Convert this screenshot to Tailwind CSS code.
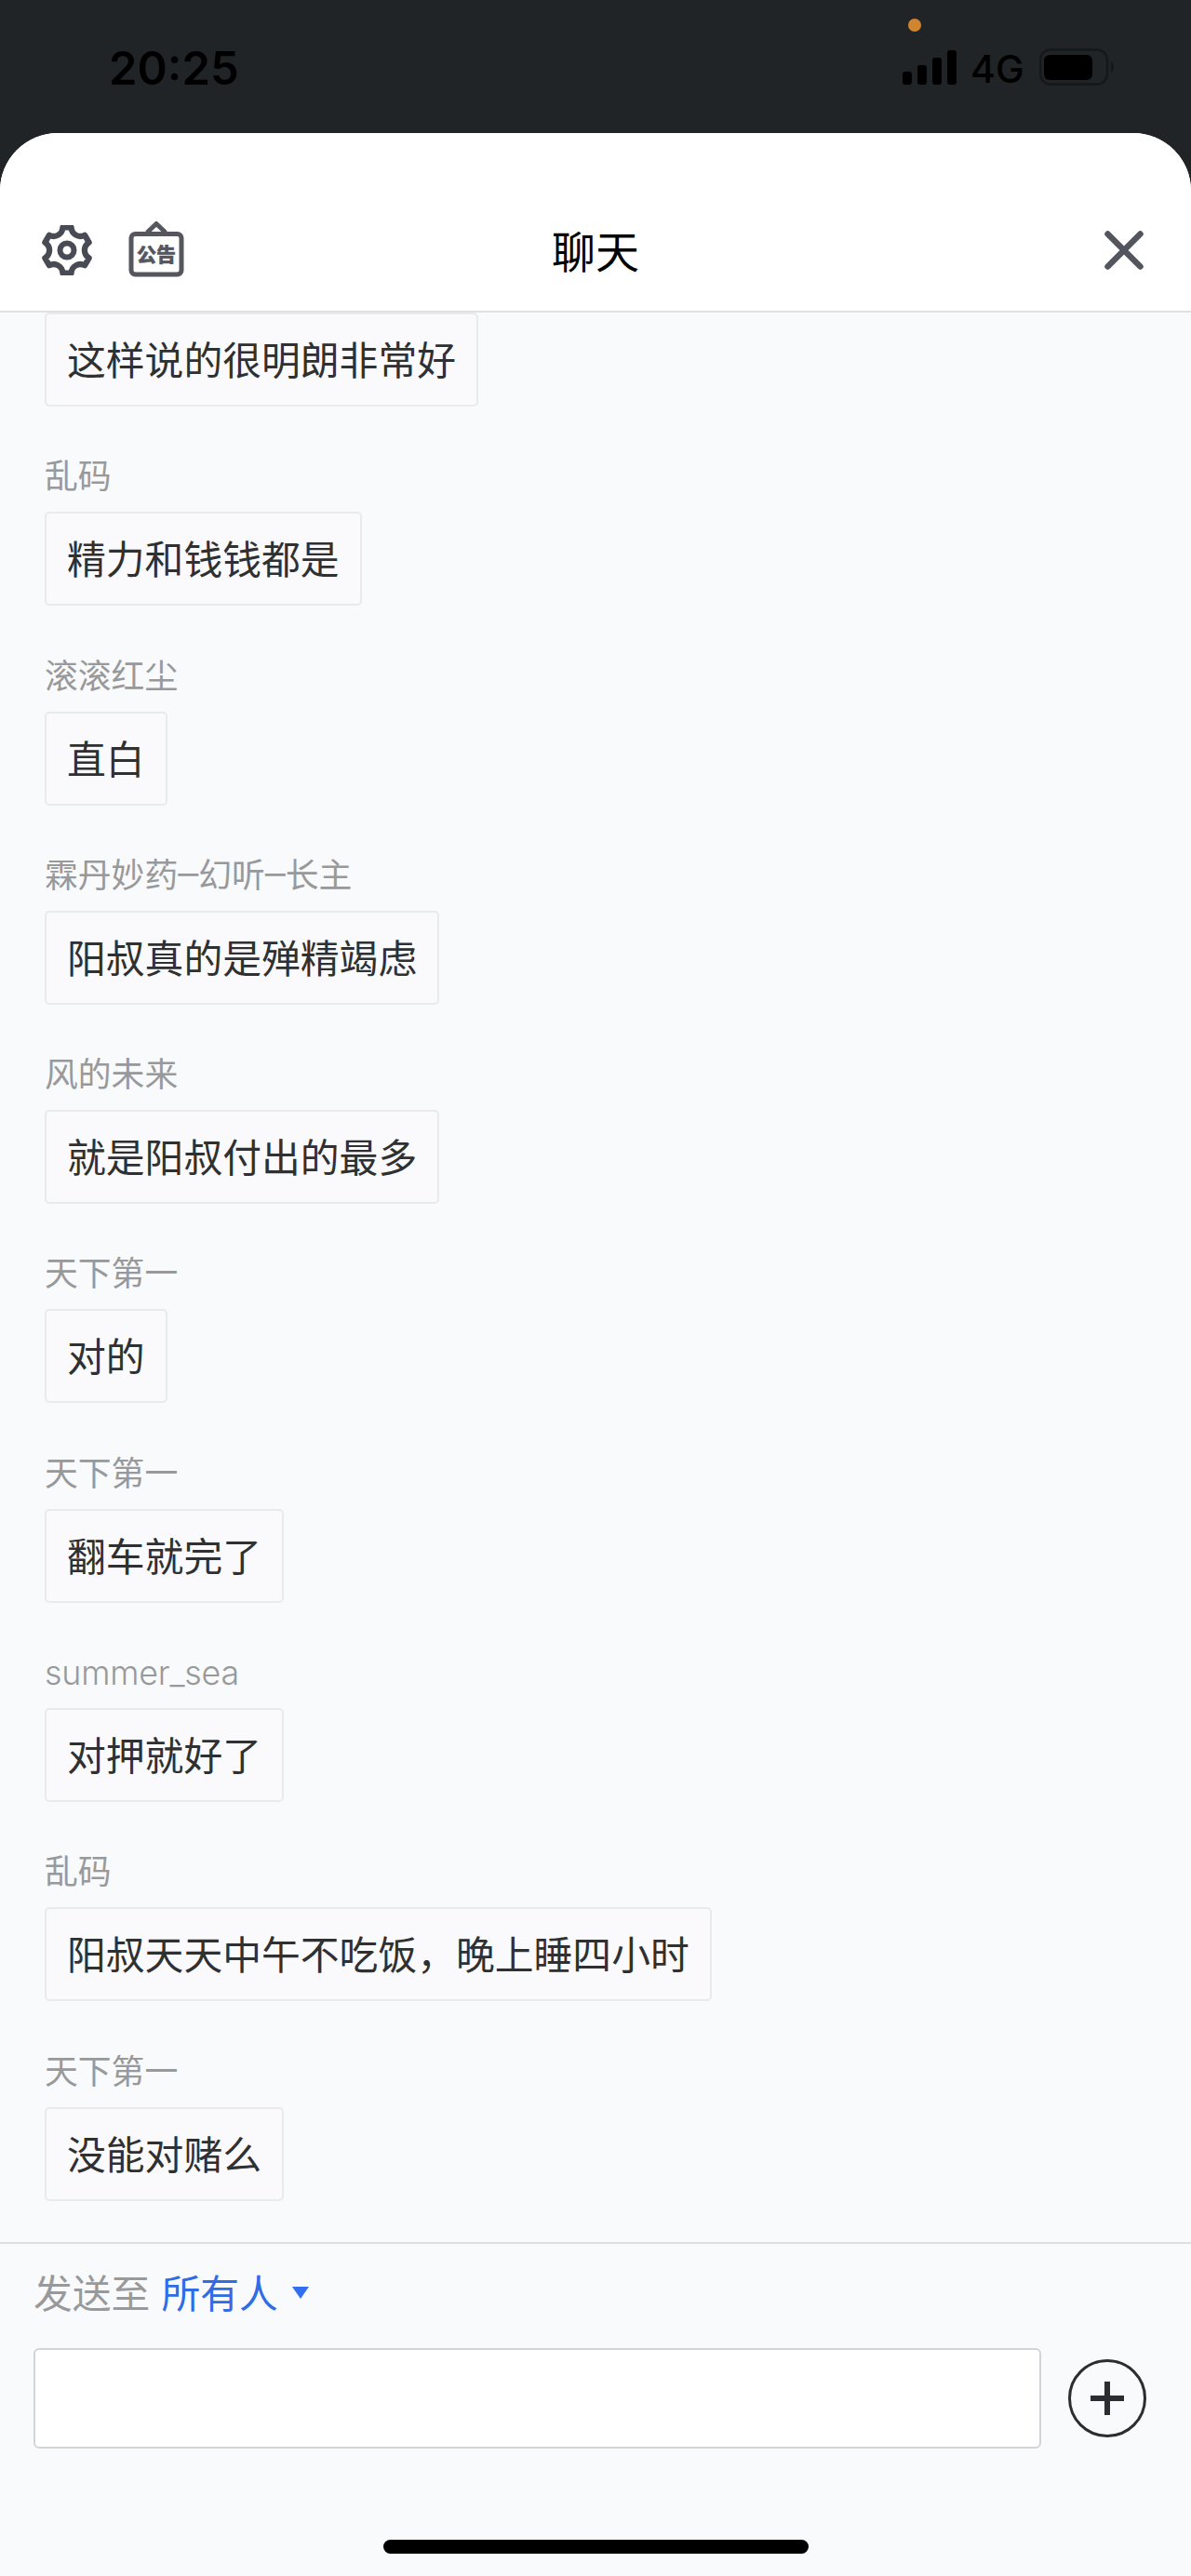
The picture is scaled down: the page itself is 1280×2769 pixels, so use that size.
<!DOCTYPE html>
<html lang="zh-CN">
<head>
  <meta charset="UTF-8">
  <meta name="viewport" content="width=device-width, initial-scale=1.0">
  <title>聊天</title>
  <script src="https://cdn.jsdelivr.net/npm/@tailwindcss/browser@4"></script>
</head>
<body class="bg-[#212426] font-['Inter','Noto_Sans_CJK_SC',sans-serif]">
  <div class="w-[1280px] h-[2769px] flex flex-col overflow-hidden">

    <!-- Status bar -->
    <div class="relative h-[143px] shrink-0 flex items-start justify-between pl-[117px] pr-[81px] pt-[45px] text-black">
      <span class="absolute left-[976px] top-[20px] size-[14px] rounded-full bg-[#d08630]"></span>
      <div class="text-[49px] leading-[57px] font-semibold">20:25</div>
      <div class="flex pt-[7px]">
        <svg class="w-[60px] h-[40px]" viewBox="0 0 60 40">
          <rect x="1" y="25" width="10" height="14" rx="3"/>
          <rect x="17" y="18" width="10" height="21" rx="3"/>
          <rect x="33" y="10" width="10" height="29" rx="3"/>
          <rect x="49" y="2" width="10" height="37" rx="3"/>
        </svg>
        <div class="w-[88px] pl-[14px] text-[41px] leading-[44px] font-medium">4G</div>
        <svg class="w-[82px] h-[40px]" viewBox="0 0 82 40">
          <rect x="1" y="1.500" width="72" height="37" rx="11" fill="none" stroke="#151718" stroke-width="2.500"/>
          <rect x="5" y="7" width="52" height="27" rx="6"/>
          <path d="M77 14c4 2 4 10 0 12z" fill="#151718"/>
        </svg>
      </div>
    </div>

    <!-- Chat sheet -->
    <div class="grow flex flex-col rounded-t-[62px] bg-[#f9fafc] overflow-hidden">
      <header class="h-[193px] shrink-0 bg-white border-b-2 border-[#e0e1e3] grid grid-cols-3 items-end px-[45px] pb-[35px]">
        <div class="flex items-end gap-[39px]">
          <svg class="size-[54px] mb-[3px]" viewBox="-27 -27 54 54" fill="none" stroke="#494b54" stroke-width="6" stroke-linejoin="round">
            <path transform="scale(1.050)" d="M22.500-8C16.500-4 16.500 4 22.500 8L18.180 15.490C11.710 12.290 4.790 16.290 4.320 23.490H-4.320C-4.790 16.290-11.710 12.290-18.180 15.490L-22.500 8C-16.500 4-16.500-4-22.500-8L-18.180-15.490C-11.710-12.290-4.790-16.290-4.320-23.490H4.320C4.790-16.290 11.710-12.290 18.180-15.490Z"/>
            <circle r="7.500"/>
          </svg>
          <svg class="w-[60px] h-[62px] mb-px" viewBox="0 0 60 62" fill="none" stroke="#55565e" stroke-width="5">
            <rect x="3" y="15.500" width="54" height="43.500" rx="4.500"/>
            <path d="M20 14L30 4.500l10 9.500" stroke-linejoin="round"/>
            <text x="30" y="44.500" text-anchor="middle" font-size="21" font-weight="900" fill="#55565e" stroke-width="0.400">公告</text>
          </svg>
        </div>
        <h1 class="text-center text-[47px] leading-[56px] text-black">聊天</h1>
        <svg class="size-[44px] justify-self-end mb-[8px] mr-[5px]" viewBox="0 0 44 44" stroke="#54565f" stroke-width="6.500" stroke-linecap="round">
          <path d="M4.500 4.500l35 35M39.500 4.500l-35 35"/>
        </svg>
      </header>

      <!-- Messages -->
      <main id="messages" class="h-[2074px] shrink-0 px-[48px] overflow-hidden"></main>

      <!-- Composer -->
      <footer class="grow border-t-2 border-[#dddee0] px-[36px] pt-[24px]">
        <div class="flex items-center h-[60px] text-[41.800px] leading-[60px]">
          <span class="text-[#98999b]">发送至</span>
          <span class="ml-[12px] text-[#2f6ce5]">所有人</span>
          <svg class="ml-[15px] mb-[4px] w-[18px] h-[13px]" viewBox="0 0 18 13" fill="#2f6ff0"><path d="M0 0h18L9 13z"/></svg>
        </div>
        <div class="mt-[28px] flex items-center">
          <input type="text" class="w-[1083px] h-[108px] rounded-[6px] border-2 border-[#d3d4d7] bg-white">
          <svg class="ml-[29px] size-[84px]" viewBox="0 0 84 84" fill="none" stroke="#2b2d30">
            <circle cx="42" cy="42" r="40.500" stroke-width="3"/>
            <path d="M42 24v36M24 42h36" stroke-width="6"/>
          </svg>
        </div>
        <div class="mx-auto mt-[98px] w-[457px] h-[15px] rounded-full bg-black"></div>
      </footer>
    </div>
  </div>

  <script>
    const dash = '<span class="text-[44px] leading-none font-light">–</span>';
    const messages = [
      { name: '', text: '这样说的很明朗非常好' },
      { name: '乱码', text: '精力和钱钱都是' },
      { name: '滚滚红尘', text: '直白' },
      { name: `霖丹妙药${dash}幻听${dash}长主`, text: '阳叔真的是殚精竭虑' },
      { name: '风的未来', text: '就是阳叔付出的最多' },
      { name: '天下第一', text: '对的' },
      { name: '天下第一', text: '翻车就完了' },
      { name: '<span class="font-light tracking-[-0.200px]">summer_sea</span>', text: '对押就好了' },
      { name: '乱码', text: '阳叔天天中午不吃饭，晚上睡四小时' },
      { name: '天下第一', text: '没能对赌么' },
    ];

    const list = document.getElementById('messages');
    messages.forEach(m => {
      const item = document.createElement('div');
      item.className = 'flex flex-col items-start mb-[49.300px]';
      item.innerHTML = `
        ${m.name ? `<div class="h-[64px] text-[35.800px] leading-[52px] text-[#98999b]">${m.name}</div>` : ''}
        <div class="h-[101px] rounded-[5px] border-2 border-[#e9eaec] bg-[#fafafc] px-[22px] text-[41.800px] leading-[100px] text-[#2f3032] whitespace-nowrap">${m.text}</div>
      `;
      list.appendChild(item);
    });
  </script>
</body>
</html>
